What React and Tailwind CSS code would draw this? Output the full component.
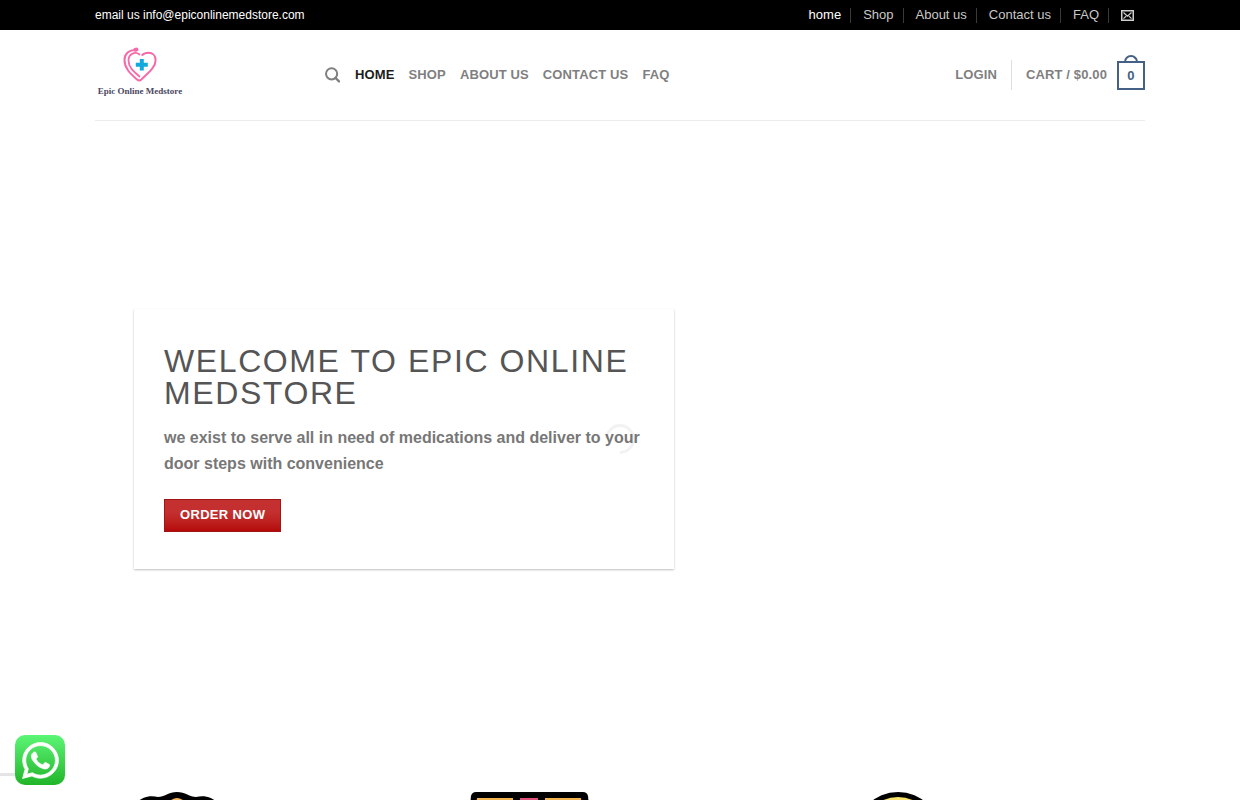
import { FaWhatsapp } from "react-icons/fa";

const topLinks = ["home", "Shop", "About us", "Contact us", "FAQ"];
const navLinks = ["Home", "Shop", "About us", "Contact us", "FAQ"];

function TopBar() {
  return (
    <div className="bg-black">
      <div className="max-w-[1050px] h-[30px] mx-auto flex items-center justify-between">
        <p className="text-xs text-white">email us info@epiconlinemedstore.com</p>
        <nav className="flex items-center text-[13px] pr-[11px]">
          {topLinks.map((label, i) => (
            <a
              key={label}
              href="#"
              className={
                "flex items-center mr-3 leading-4 after:content-[''] after:h-[15px] after:w-px after:ml-[9px] after:bg-[#3a3a3a] " +
                (i === 0 ? "text-white" : "text-[#c8c8c8] hover:text-white")
              }
            >
              {label}
            </a>
          ))}
          <a href="mailto:info@epiconlinemedstore.com" aria-label="Email us">
            <svg width="13" height="11" viewBox="0 0 13 11" fill="none" stroke="#d0d0d0">
              <rect x="0.75" y="0.75" width="11.5" height="9.5" strokeWidth="1.5" />
              <path d="M2.5 2.5l4 3.6 4-3.6M2.5 8.7l2.6-2.6M10.5 8.7L7.9 6.1" strokeWidth="1.2" />
            </svg>
          </a>
        </nav>
      </div>
    </div>
  );
}

function Logo() {
  return (
    <a href="#" className="w-[90px] flex flex-col items-center">
      <svg width="36" height="36" viewBox="0 0 36 36" fill="none">
        <g stroke="#f56aa8" strokeLinecap="round" strokeLinejoin="round">
          <path
            d="M14 3C7 2.500 2.500 7 2.500 13c0 8 5.500 13.500 12.500 19.500 1.600 1.400 3 1.300 4.400 0C26 26 33.600 20.500 33.600 13.200 33.600 8.500 30.500 5.800 26.500 5.800c-2.800 0-5 .8-6.200 2.200"
            strokeWidth="2"
          />
          <path
            d="M17.500 7.500C13.500 4.200 6.500 6.500 6.500 13.500c0 6.500 4.500 10.500 11 16"
            strokeWidth="1.800"
          />
          <path d="M13.500 2.800l1-.2" strokeWidth="4" />
        </g>
        <path d="M17.800 12h4v3.800h4v4h-4v3.800h-4v-3.800h-4v-4h4z" fill="#12aadd" />
      </svg>
      <span className="font-['Liberation_Serif',serif] font-bold text-[9px] leading-4 normal-case text-[#4a4763] whitespace-nowrap">
        Epic Online Medstore
      </span>
    </a>
  );
}

function Header() {
  return (
    <header className="max-w-[1050px] mx-auto border-b border-[#ececec]">
      <div className="h-[90px] flex items-center text-[13px] font-bold uppercase text-[#7f7f7f]">
        <div className="w-[230px] pb-1">
          <Logo />
        </div>
        <nav className="flex-1 flex items-center gap-3.5 tracking-[0.01em]">
          <button type="button" aria-label="Search" className="mr-px">
            <svg width="15" height="16" viewBox="0 0 15 16" fill="none" stroke="#7f7f7f" strokeWidth="2">
              <circle cx="6.600" cy="6.800" r="5.600" />
              <path d="M10.600 11l3.400 3.400" strokeWidth="2.400" strokeLinecap="round" />
            </svg>
          </button>
          {navLinks.map((label, i) => (
            <a
              key={label}
              href="#"
              className={i === 0 ? "text-[#1c1c1c]" : "hover:text-[#1c1c1c]"}
            >
              {label}
            </a>
          ))}
        </nav>
        <div className="flex items-center tracking-[0.01em]">
          <a href="#">Login</a>
          <span className="w-px h-[30px] mx-3.5 bg-[#dedede]" />
          <a href="#" className="flex items-center gap-2.5">
            <span>Cart / $0.00</span>
            {/* Bag */}
            <span className="relative w-7 h-[29px] mt-px border-2 border-[#446084] text-[#446084] flex items-center justify-center">
              <span className="absolute -top-2 left-1/2 -translate-x-1/2 w-3.5 h-2 border-2 border-b-0 border-[#446084] rounded-t-full" />
              0
            </span>
          </a>
        </div>
      </div>
    </header>
  );
}

function Hero() {
  return (
    <section className="relative min-h-[636px] flex items-center">
      <div className="w-full max-w-[1050px] mx-auto px-[39px]">
        <div className="max-w-[540px] px-[30px] pt-9 pb-[37px] bg-white shadow-[0_1px_3px_-2px_rgba(0,0,0,0.12),0_1px_2px_rgba(0,0,0,0.24)]">
          <h1 className="text-[32px] leading-8 tracking-wider uppercase text-[#555]">
            Welcome to Epic Online Medstore
          </h1>
          <p className="mt-4 text-base leading-[26px] font-bold text-[#777]">
            we exist to serve all in need of medications and deliver to your door steps with
            convenience
          </p>
          <button
            type="button"
            className="mt-[22px] block h-[33px] px-[15px] pb-0.5 border border-[#a01515] bg-linear-to-b from-[#c42f2f] from-40% to-[#b50808] text-[13px] font-bold tracking-wide uppercase text-white"
          >
            Order now
          </button>
        </div>
      </div>
      {/* Loading spinner */}
      <div className="absolute top-1/2 left-1/2 size-[30px] -translate-x-1/2 -translate-y-1/2 -rotate-45 rounded-full border-3 border-black/5 border-l-transparent" />
    </section>
  );
}

function Features() {
  return (
    <section className="max-w-[1050px] mx-auto pt-[35px] grid grid-cols-3">
      <svg className="w-full" height="90" viewBox="0 0 350 90" preserveAspectRatio="xMinYMin">
        <path
          d="M82 0c8 0 13 5 19 5 8-2 17 0 21 6 10 4 12 12 8 20 4 10 0 20-8 24-6 12-20 14-40 14s-34-2-40-14c-8-4-12-14-8-24-4-8-2-16 8-20 4-6 13-8 21-6 6 0 11-5 19-5z"
          fill="#000"
        />
        <ellipse cx="82" cy="28" rx="14" ry="22" fill="#f5b556" />
      </svg>
      <svg className="w-full" height="90" viewBox="0 0 350 90" preserveAspectRatio="xMinYMin">
        <path d="M31 0h107q4 0 5 4l8 84H18l8-84q1-4 5-4z" fill="#000" />
        <path d="M32 6h36v76H25zM100 6h36l7 76h-43z" fill="#f2b24c" />
        <path d="M75 6h18v76H75z" fill="#e0527c" />
      </svg>
      <svg className="w-full" height="90" viewBox="0 0 350 90" preserveAspectRatio="xMinYMin">
        <circle cx="103" cy="43" r="43" fill="#000" />
        <circle cx="103" cy="43" r="38" fill="#f9e26a" />
      </svg>
    </section>
  );
}

export default function App() {
  return (
    <div className="min-h-screen bg-white font-['Liberation_Sans',Arial,sans-serif]">
      <TopBar />
      <Header />
      <Hero />
      <Features />

      {/* Floating chat button */}
      <div className="fixed left-0 bottom-[15px] flex">
        <span className="w-[15px] h-[3px] mt-[38px] bg-[#e4e4e4]" />
        <a
          href="#"
          aria-label="Chat on WhatsApp"
          className="size-[50px] rounded-[10px] bg-linear-to-b from-[#5bf675] to-[#20b527] text-white flex items-center justify-center"
        >
          <FaWhatsapp size={41} stroke="currentColor" strokeWidth={10} />
        </a>
      </div>
    </div>
  );
}
